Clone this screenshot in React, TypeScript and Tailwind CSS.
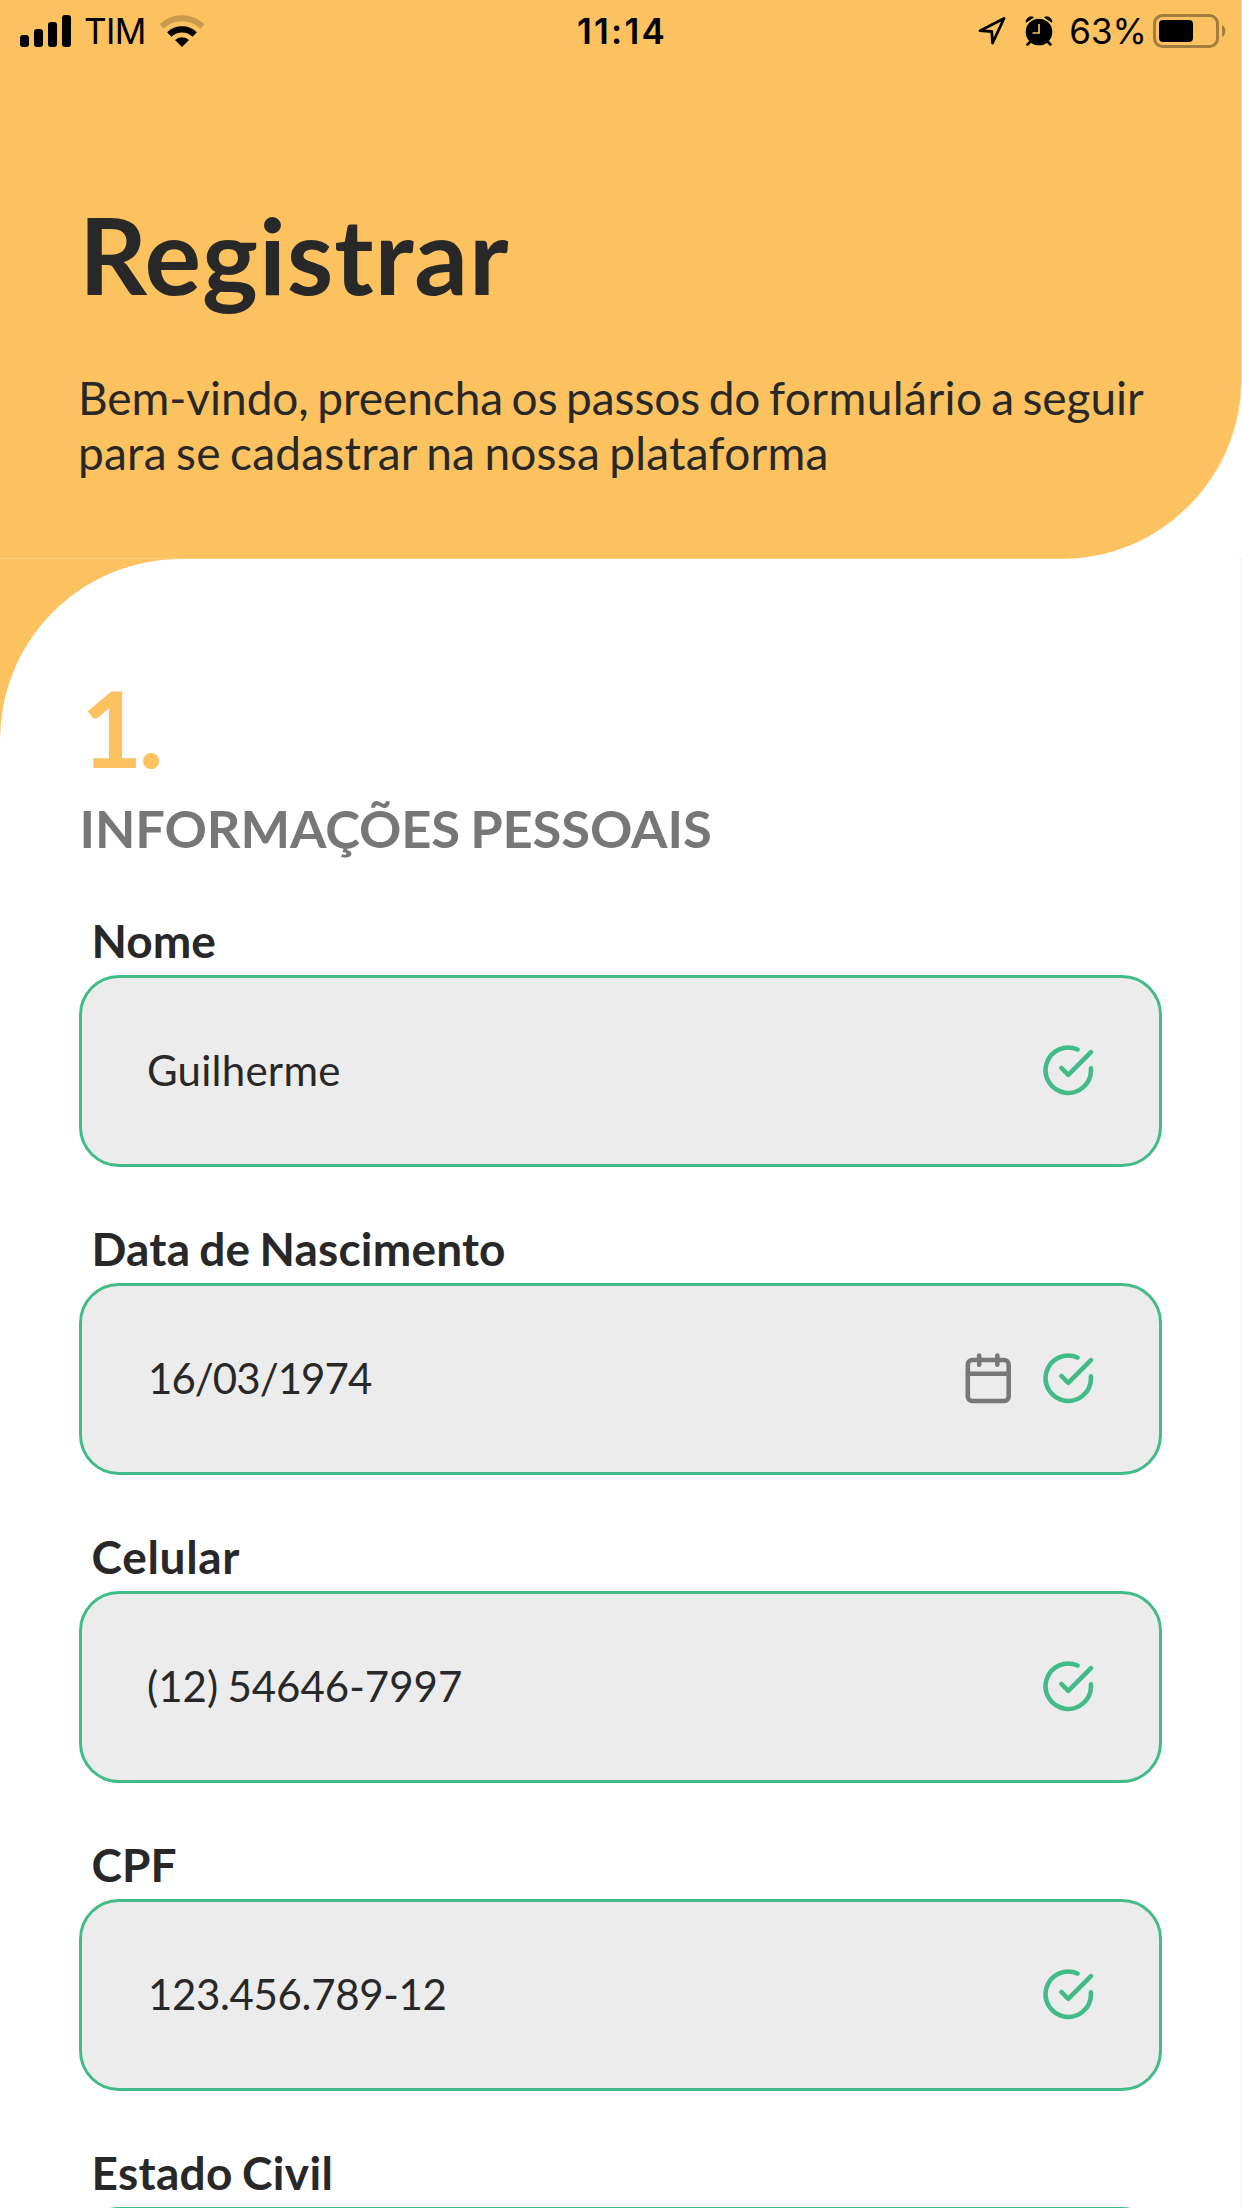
import { FiCalendar, FiCheckCircle } from "react-icons/fi";

type FieldProps = {
  label: string;
  labelClass?: string;
  value?: string;
  valueClass?: string;
  calendar?: boolean;
};

function Field({ label, labelClass = "", value, valueClass = "", calendar }: FieldProps) {
  return (
    <div className="h-[308px] shrink-0">
      <div className={`h-[56px] pl-[12.5px] text-[46px] font-bold leading-[56px] text-[#282828] [word-spacing:-2.3px] ${labelClass}`}>
        {label}
      </div>
      <div className="mt-[6px] flex h-[192px] w-[1083px] items-center rounded-[40px] border-[3px] border-[#41bc87] bg-[#ececec] pl-[65px] pr-[63.5px]">
        <span className={`flex-1 pb-[2px] text-[42px] leading-[56px] text-[#282828] [word-spacing:-1.5px] ${valueClass}`}>{value}</span>
        <div className="flex gap-[25.5px] pb-px">
          {calendar && <FiCalendar className="size-[54.5px] text-[#777777]" />}
          <FiCheckCircle className="size-[54.5px] text-[#41bc87]" />
        </div>
      </div>
    </div>
  );
}

function StatusBar() {
  return (
    <div className="flex h-[62px] items-center justify-between pl-[20px] pr-[14px] font-['Inter',sans-serif] text-[35px] leading-[62px] text-black">
      <div className="flex flex-1 items-center">
        <svg width="52" height="32" viewBox="0 0 52 32" className="mr-[12px]">
          <rect x="0" y="20" width="9" height="12" rx="3" />
          <rect x="14" y="14" width="9" height="18" rx="3" />
          <rect x="28" y="7" width="9" height="25" rx="3" />
          <rect x="42" y="0" width="9" height="32" rx="3" />
        </svg>
        <span className="w-[75px] tracking-[-0.6px]">TIM</span>
        <svg width="46" height="34" viewBox="0 0 46 34" fill="none">
          <path d="M2.5 12.5a29.500 29.500 0 0 1 41 0" stroke="#c99a4d" strokeWidth="6" />
          <path d="M10.300 20.500a18.400 18.400 0 0 1 25.400 0" stroke="#000" strokeWidth="6.200" />
          <path d="M16 26a10 10 0 0 1 14 0l-7 7z" fill="#000" />
        </svg>
      </div>
      <span className="pr-[3px] font-semibold tracking-[2.2px]">11:14</span>
      <div className="flex flex-1 items-center justify-end">
        <svg width="28" height="28" viewBox="0 0 28 28" fill="none" stroke="#000" strokeWidth="2.800" strokeLinejoin="round">
          <path d="M2 13.700 26 1.500 14.600 26 13.700 14.500z" />
        </svg>
        <svg width="28" height="30" viewBox="0 0 28 30" className="ml-[19px] mr-[16px]">
          <circle cx="14" cy="16" r="13.300" />
          <path d="M1.200 6.200a5 5 0 0 1 7.200-4.800zM26.800 6.200a5 5 0 0 0-7.200-4.800z" stroke="#000" strokeWidth="1" strokeLinejoin="round" />
          <path d="m6 25-3.500 3.500M22 25l3.500 3.500" stroke="#000" strokeWidth="2.500" strokeLinecap="round" />
          <path d="M14 8v9H7.500" fill="none" stroke="#fcc260" strokeWidth="1.700" />
        </svg>
        <span>63%</span>
        <svg width="74" height="34" viewBox="0 0 74 34" className="ml-[6px]">
          <rect x="1.500" y="1.500" width="63" height="31" rx="8" fill="none" stroke="#a27d3e" strokeWidth="3" />
          <rect x="6" y="6" width="34" height="22" rx="4" />
          <path d="M69 11a7 7 0 0 1 0 12z" fill="#a27d3e" />
        </svg>
      </div>
    </div>
  );
}

export default function App() {
  return (
    <div className="flex h-[2208px] w-[1242px] flex-col overflow-hidden bg-white font-['Lato',sans-serif]">
      <header className="flex h-[559px] shrink-0 flex-col rounded-br-[181px] border-r border-[#fdd79a] bg-[#fcc260]">
        <StatusBar />
        <div className="pl-[78px] pt-[129px] text-[#282828]">
          <h1 className="h-[127px] pl-px text-[106px] font-bold leading-[127px] tracking-[0.9px]">Registrar</h1>
          <p className="mt-[52px] flex flex-col whitespace-nowrap text-[46px] leading-[55px]">
            <span className="tracking-[-0.06px] [word-spacing:-3.2px]">
              Bem-vindo, preencha os passos do <span className="tracking-[0.45px]">formulário</span> a seguir
            </span>
            <span className="tracking-[0.22px] [word-spacing:-2.7px]">para se cadastrar na nossa plataforma</span>
          </p>
        </div>
        <div className="mt-auto h-px w-[1061px] shrink-0 bg-[#fdce80]" />
      </header>
      <main className="h-[1649px] shrink-0 bg-[linear-gradient(#fcc260,#fcc260)] bg-[length:200px_200px] bg-no-repeat">
        <div className="flex h-full flex-col rounded-tl-[181px] border-r border-[#fdebd0] bg-white pl-[79px] pt-[105px]">
          <div className="h-[127px] shrink-0 pl-[2px] text-[106px] font-bold leading-[127px] tracking-[-4px] text-[#fcc260]">1.</div>
          <h2 className="mb-[44px] h-[78px] shrink-0 pl-[0.5px] text-[52.5px] font-bold leading-[74px] tracking-[-0.12px] text-[#777777] [word-spacing:-2.5px]">
            INFORMAÇÕES PESSOAIS
          </h2>
          <Field label="Nome" value="Guilherme" valueClass="tracking-[0.25px]" />
          <Field
            label="Data de Nascimento"
            labelClass="tracking-[0.2px]"
            value="16/03/1974"
            valueClass="pl-px tracking-[-0.95px]"
            calendar
          />
          <Field label="Celular" labelClass="tracking-[0.7px]" value="(12) 54646-7997" />
          <Field label="CPF" value="123.456.789-12" valueClass="pl-px tracking-[-0.35px]" />
          <Field label="Estado Civil" labelClass="tracking-[0.33px]" />
        </div>
      </main>
    </div>
  );
}
